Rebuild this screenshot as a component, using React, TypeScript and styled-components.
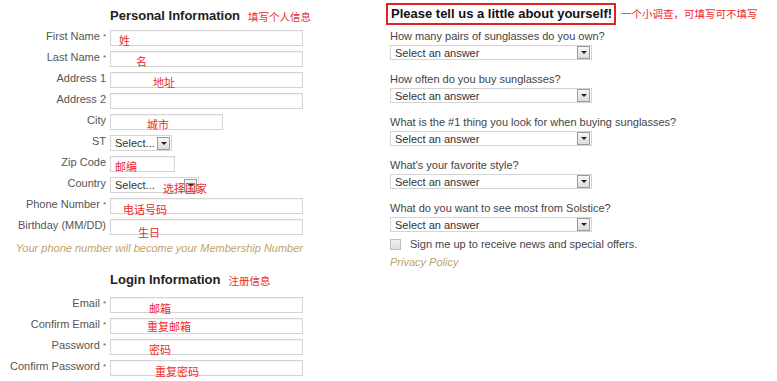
import styled, { createGlobalStyle } from 'styled-components';

const GlobalStyle = createGlobalStyle`
  body {
    margin: 0;
    background: #ffffff;
    font-family: "Liberation Sans", Arial, sans-serif;
  }
`;

type FieldDef = {
  label: string;
  required?: boolean;
  kind: 'input' | 'select';
  width: number;
  note?: string;
  noteX?: number;
  noteY?: number;
};

const personal: FieldDef[] = [
  { label: 'First Name', required: true, kind: 'input', width: 193, note: '姓', noteX: 8, noteY: 3 },
  { label: 'Last Name', required: true, kind: 'input', width: 193, note: '名', noteX: 25, noteY: 3 },
  { label: 'Address 1', kind: 'input', width: 193, note: '地址', noteX: 42, noteY: 3 },
  { label: 'Address 2', kind: 'input', width: 193 },
  { label: 'City', kind: 'input', width: 113, note: '城市', noteX: 36, noteY: 3 },
  { label: 'ST', kind: 'select', width: 62 },
  { label: 'Zip Code', kind: 'input', width: 65, note: '邮编', noteX: 4, noteY: 3 },
  { label: 'Country', kind: 'select', width: 89, note: '选择国家', noteX: 52, noteY: 4 },
  { label: 'Phone Number', required: true, kind: 'input', width: 193, note: '电话号码', noteX: 12, noteY: 4 },
  { label: 'Birthday (MM/DD)', kind: 'input', width: 193, note: '生日', noteX: 27, noteY: 6 },
];

const login: FieldDef[] = [
  { label: 'Email', required: true, kind: 'input', width: 193, note: '邮箱', noteX: 38, noteY: 4 },
  { label: 'Confirm Email', required: true, kind: 'input', width: 193, note: '重复邮箱', noteX: 36, noteY: 1 },
  { label: 'Password', required: true, kind: 'input', width: 193, note: '密码', noteX: 38, noteY: 3 },
  { label: 'Confirm Password', required: true, kind: 'input', width: 193, note: '重复密码', noteX: 44, noteY: 4 },
];

const questions = [
  'How many pairs of sunglasses do you own?',
  'How often do you buy sunglasses?',
  'What is the #1 thing you look for when buying sunglasses?',
  "What's your favorite style?",
  'What do you want to see most from Solstice?',
];

const Page = styled.div`
  display: flex;
  width: 777px;
  height: 381px;
  overflow: hidden;
`;

const LeftCol = styled.div`
  width: 310px;
  flex-shrink: 0;
  padding-top: 6px;
  display: flex;
  flex-direction: column;
`;

const SectionHead = styled.div<{ $top?: number; $bottom?: number }>`
  display: flex;
  align-items: flex-end;
  gap: 8px;
  height: 18px;
  white-space: nowrap;
  margin: ${(p) => p.$top ?? 0}px 0 ${(p) => p.$bottom ?? 6}px 110px;
`;

const HeadText = styled.span`
  flex-shrink: 0;
  font-size: 13px;
  font-weight: bold;
  color: #222;
  line-height: 16px;
`;

const RedNote = styled.span<{ $size?: number }>`
  flex-shrink: 0;
  font-family: "Noto Sans CJK SC", "Liberation Sans", sans-serif;
  font-size: ${(p) => p.$size ?? 10.5}px;
  color: #ee2a2a;
  line-height: 14px;
  white-space: nowrap;
`;

const FieldGrid = styled.div`
  display: grid;
  grid-template-columns: 106px 193px;
  column-gap: 4px;
  row-gap: 5px;
  grid-auto-rows: 16px;
`;

const Label = styled.label`
  text-align: right;
  font-size: 11px;
  line-height: 13px;
  color: #555;
  white-space: nowrap;
`;

const Star = styled.span`
  font-size: 8px;
  vertical-align: top;
  margin-left: 3px;
`;

const InputBox = styled.div<{ $w: number }>`
  position: relative;
  width: ${(p) => p.$w}px;
  height: 16px;
  box-sizing: border-box;
  border: 1px solid #d4d4d4;
  box-shadow: inset 0 1px 1px rgba(0, 0, 0, 0.05);
  background: #fff;
`;

const FieldNote = styled(RedNote)<{ $x: number; $y: number }>`
  position: absolute;
  left: ${(p) => p.$x}px;
  top: ${(p) => p.$y}px;
  font-size: 11px;
  line-height: 12px;
`;

const SelectBox = styled.div<{ $w: number; $h?: number }>`
  position: relative;
  width: ${(p) => p.$w}px;
  height: ${(p) => p.$h ?? 16}px;
  box-sizing: border-box;
  border: 1px solid #d4d4d4;
  background: #fff;
  display: flex;
  align-items: center;
  justify-content: space-between;
  padding-left: 4px;
  font-size: 11px;
  color: #333;
`;

const DropBtn = styled.span`
  width: 11px;
  height: 11px;
  margin-right: 1px;
  border: 1px solid #9a9a9a;
  background: linear-gradient(#f7f7f7, #dcdcdc);
  display: flex;
  align-items: center;
  justify-content: center;

  &::after {
    content: '';
    border-left: 3px solid transparent;
    border-right: 3px solid transparent;
    border-top: 3px solid #222;
  }
`;

const PhoneNote = styled.div`
  margin-top: 7px;
  width: 303px;
  text-align: right;
  font-size: 11px;
  font-style: italic;
  line-height: 13px;
  color: #bda46a;
`;

const RightCol = styled.div`
  margin-left: 76px;
  padding-top: 3px;
  display: flex;
  flex-direction: column;
`;

const SurveyHead = styled.div`
  display: flex;
  align-items: center;
  gap: 5px;
`;

const BoxedTitle = styled.div`
  height: 22px;
  box-sizing: border-box;
  border: 2px solid #e02222;
  padding: 0 2px 0 3px;
  font-size: 13px;
  font-weight: bold;
  line-height: 18px;
  color: #111;
  white-space: nowrap;
`;

const QuestionList = styled.div`
  margin: 5px 0 0 4px;
  display: flex;
  flex-direction: column;
  gap: 13px;
`;

const Question = styled.div`
  display: flex;
  flex-direction: column;
  gap: 3px;
`;

const QText = styled.div`
  font-size: 11px;
  line-height: 12px;
  color: #444;
  white-space: nowrap;
`;

const CheckRow = styled.div`
  margin: 6px 0 0 4px;
  display: flex;
  align-items: center;
  gap: 9px;
  font-size: 11px;
  line-height: 12px;
  color: #444;
`;

const CheckBox = styled.span`
  width: 11px;
  height: 11px;
  box-sizing: border-box;
  border: 1px solid #bdbdbd;
  background: linear-gradient(#f0f0f0, #dedede);
`;

const Privacy = styled.div`
  margin: 6px 0 0 4px;
  font-size: 11px;
  font-style: italic;
  line-height: 12px;
  color: #bda46a;
`;

function Field({ f }: { f: FieldDef }) {
  const note = f.note ? (
    <FieldNote $x={f.noteX ?? 0} $y={f.noteY ?? 0}>
      {f.note}
    </FieldNote>
  ) : null;
  return (
    <>
      <Label>
        {f.label}
        {f.required && <Star>*</Star>}
      </Label>
      {f.kind === 'input' ? (
        <InputBox $w={f.width}>{note}</InputBox>
      ) : (
        <SelectBox $w={f.width}>
          Select...
          <DropBtn />
          {note}
        </SelectBox>
      )}
    </>
  );
}

export default function App() {
  return (
    <>
      <GlobalStyle />
      <Page>
        <LeftCol>
          <SectionHead>
            <HeadText>Personal Information</HeadText>
            <RedNote>填写个人信息</RedNote>
          </SectionHead>
          <FieldGrid>
            {personal.map((f) => (
              <Field key={f.label} f={f} />
            ))}
          </FieldGrid>
          <PhoneNote>Your phone number will become your Membership Number</PhoneNote>
          <SectionHead $top={15} $bottom={9}>
            <HeadText>Login Information</HeadText>
            <RedNote>注册信息</RedNote>
          </SectionHead>
          <FieldGrid>
            {login.map((f) => (
              <Field key={f.label} f={f} />
            ))}
          </FieldGrid>
        </LeftCol>
        <RightCol>
          <SurveyHead>
            <BoxedTitle>Please tell us a little about yourself!</BoxedTitle>
            <RedNote>一个小调查，可填写可不填写</RedNote>
          </SurveyHead>
          <QuestionList>
            {questions.map((q) => (
              <Question key={q}>
                <QText>{q}</QText>
                <SelectBox $w={202} $h={15}>
                  Select an answer
                  <DropBtn />
                </SelectBox>
              </Question>
            ))}
          </QuestionList>
          <CheckRow>
            <CheckBox />
            Sign me up to receive news and special offers.
          </CheckRow>
          <Privacy>Privacy Policy</Privacy>
        </RightCol>
      </Page>
    </>
  );
}
